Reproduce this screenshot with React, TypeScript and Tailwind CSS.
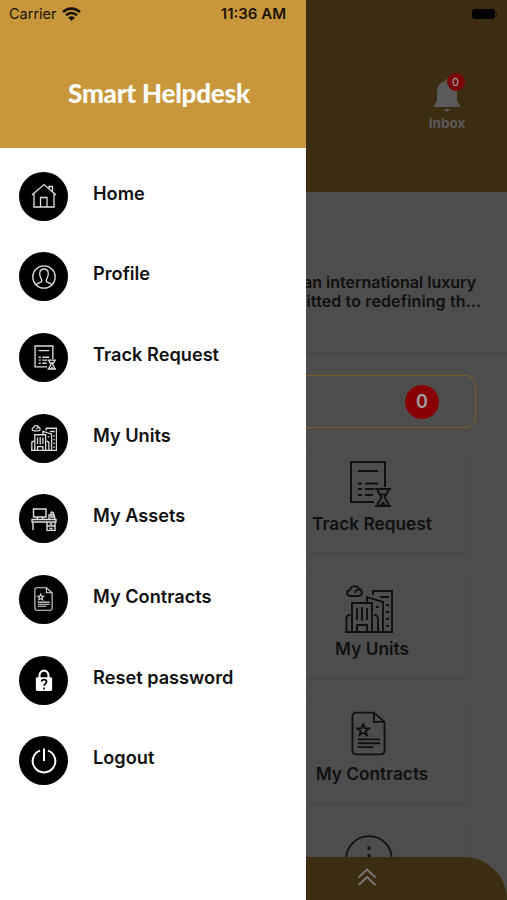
import { ReactNode } from 'react';

interface IconProps {
  className?: string;
}

function HomeIcon({ className }: IconProps) {
  return (
    <svg viewBox="0 0 26 26" className={className} fill="none" stroke="currentColor" strokeWidth="1.3">
      <path d="M1 12 13 1.5 25 12M3 10.5V24h20V10.5M18 5.5V3.5h3.5v5M9.5 24V14.5h6.5V24" />
    </svg>
  );
}

function ProfileIcon({ className }: IconProps) {
  return (
    <svg viewBox="0 0 26 26" className={className} fill="none" stroke="currentColor" strokeWidth="1.3">
      <circle cx="13" cy="13" r="11.2" />
      <path d="M5 20.8c1.5-2 5.5-1.8 5.8-3.6.2-1.3-.4-2-1-3.2C8 10.5 8 5 13 5s5 5.5 3.2 9c-.6 1.2-1.2 1.9-1 3.2.3 1.8 4.3 1.6 5.8 3.6" />
    </svg>
  );
}

function TrackIcon({ className }: IconProps) {
  return (
    <svg viewBox="0 0 44 46" className={className} fill="none" stroke="currentColor" strokeWidth="2">
      <path d="M25 41H2V1h34v25" />
      <path d="M9 10h20M9 22.5h4M16 22.5h13M9 28h4M16 28h9M9 34h4M16 34h8" />
      <path d="M26 28h16M26 45h16M28.5 28c0 4.5 3 5.5 4 8.5-1 2.5-4 4-4 8.5M39.5 28c0 4.5-3 5.5-4 8.5 1 2.5 4 4 4 8.5M31 33.5h6" />
      <path d="M30.5 44.5 34 40l3.5 4.5z" fill="currentColor" stroke="none" />
    </svg>
  );
}

function UnitsIcon({ className }: IconProps) {
  return (
    <svg viewBox="0 0 48 48" className={className} fill="none" stroke="currentColor" strokeWidth="1.9">
      <path d="M0 47h48M7 47V18h20v29M1.5 47V33c0-2 1-3 4-3M33 47V34c0-3-1-4-4-4M12 23v12M17 22v14M22 23v12M12 47v-7h10v7M22 17v-5l16 5v30M28 10V6h19v41" />
      <path d="M6 11c-5 0-5-5.5-1-6 1-5 8-5 9-1 4 1 4 7-1 7H5M10 8c0-3 3-4 5-3" />
      <path d="M35 12h9M31 22h3M41 20h3M41 27h3M41 34h3M41 41h3" />
    </svg>
  );
}

function AssetsIcon({ className }: IconProps) {
  return (
    <svg viewBox="0 0 26 24" className={className} fill="none" stroke="currentColor" strokeWidth="1.4">
      <path d="M2.5 2h12.5v8H2.5zM6 12l1-2h4l1 2M1 12.5h24v2.5H1zM2 15v8M16 15v8.5h8V15M16 19h8M18.5 17h3M18.5 21.5h3" />
      <path d="M18 12V8h5l1 4M19.5 8l1-3 2 1 .5 2M19 10h4" />
    </svg>
  );
}

function ContractIcon({ className }: IconProps) {
  return (
    <svg viewBox="0 0 36 46" className={className} fill="none" stroke="currentColor" strokeWidth="1.9">
      <path d="M5 1.5h18.5L34.5 11v30a3.5 3.5 0 0 1-3.5 3.5H5A3.5 3.5 0 0 1 1.5 41V5A3.5 3.5 0 0 1 5 1.5zM23.5 1.5V11h11" />
      <path d="m12.5 13.5 1.7 4 4.3.3-3.3 2.7 1.2 4.2-3.9-2.4-3.7 2.4 1.1-4.2-3.3-2.7 4.2-.3z" />
      <path d="M7 29h23M7 33h23M7 37h16" />
    </svg>
  );
}

function LockIcon({ className }: IconProps) {
  return (
    <svg viewBox="0 0 18 24" className={className} fill="none" stroke="currentColor">
      <path d="M4.3 11V7c0-7 9.4-7 9.4 0v4" strokeWidth="2.2" />
      <rect x=".5" y="8.5" width="17" height="14.5" rx="1.5" fill="currentColor" stroke="none" />
      <path d="M6.5 13.2c.2-2.8 5.2-2.8 5.2.1 0 1.9-2.6 2-2.6 4.2M9.1 19.3v2" stroke="#000" strokeWidth="1.7" />
    </svg>
  );
}

function PowerIcon({ className }: IconProps) {
  return (
    <svg viewBox="0 0 26 26" className={className} fill="none" stroke="currentColor" strokeWidth="2">
      <path d="M9 2.6a11.3 11.3 0 1 0 8 0M13 .5v12.5" />
    </svg>
  );
}

function BellIcon() {
  return (
    <svg viewBox="0 0 26 34" className="w-[26px] h-[34px]" fill="currentColor">
      <path d="M13 0c1.3 0 1.8.9 1.8 2.3C20.5 3.3 23 7.5 23 13v9l3 4.5V28H0v-1.5L3 22v-9C3 7.5 5.5 3.3 11.2 2.3 11.2.9 11.7 0 13 0zM10 30h6c-.5 3.3-5.5 3.3-6 0z" />
    </svg>
  );
}

function WifiIcon() {
  return (
    <svg viewBox="0 0 19 14" className="w-[19px] h-[14px]" fill="none" stroke="currentColor" strokeWidth="2.6">
      <path d="M1 5.2c4.8-4.8 12.2-4.8 17 0M4 8.3c3.2-3.1 7.8-3.1 11 0" />
      <path d="m9.5 14-3.3-3.4c1.8-1.7 4.8-1.7 6.6 0z" fill="currentColor" stroke="none" />
    </svg>
  );
}

const menuItems = [
  { label: 'Home', icon: <HomeIcon className="w-[26px] h-[26px]" /> },
  { label: 'Profile', icon: <ProfileIcon className="w-[26px] h-[26px]" /> },
  { label: 'Track Request', icon: <TrackIcon className="w-[23px] h-[25px] ml-[3px] [stroke-width:2.5]" /> },
  { label: 'My Units', icon: <UnitsIcon className="w-[26px] h-[26px] [stroke-width:2.4]" /> },
  { label: 'My Assets', icon: <AssetsIcon className="w-[26px] h-6" /> },
  { label: 'My Contracts', icon: <ContractIcon className="w-[19px] h-6 [stroke-width:2.1]" /> },
  { label: 'Reset password', icon: <LockIcon className="w-[18px] h-[23px] text-white" /> },
  { label: 'Logout', icon: <PowerIcon className="w-[26px] h-[26px] text-white" /> },
];

interface TileProps {
  label?: string;
  children: ReactNode;
}

function Tile({ label, children }: TileProps) {
  return (
    <div className="h-[103px] w-[163px] mb-[22px] pt-[9px] rounded-r-lg shadow-[0_1px_3px_rgba(0,0,0,0.12)]">
      <div className="flex h-[49px] w-[125px] items-center justify-center">{children}</div>
      {label && (
        <div className="w-[132px] pt-1 text-center text-[17.3px] leading-6 font-semibold whitespace-nowrap">{label}</div>
      )}
    </div>
  );
}

function Drawer() {
  return (
    <aside className="w-[306px] shrink-0 bg-white">
      <header className="h-[147.5px] bg-[#c8973b]">
        <div className="flex h-7 items-center pl-[9px] pr-[20px] text-[14.5px] text-[#191307]">
          <span className="mr-[5px]">Carrier</span>
          <WifiIcon />
          <span className="ml-auto font-semibold text-[15px]">11:36 AM</span>
        </div>
        <h1 className="mt-[48px] ml-[68px] font-['Lato'] text-[26px] leading-[34px] tracking-[-0.2px] font-black text-white whitespace-nowrap">
          Smart Helpdesk
        </h1>
      </header>
      <nav className="pt-[24px]">
        {menuItems.map((item) => (
          <a key={item.label} className="flex h-[80.7px] items-start pl-[19px]">
            <span className="flex size-[49px] items-center justify-center rounded-full bg-black text-[#dedede]">
              {item.icon}
            </span>
            <span className="ml-[25px] pt-[9px] text-[18.2px] leading-6 font-semibold text-[#111]">{item.label}</span>
          </a>
        ))}
      </nav>
    </aside>
  );
}

function Dashboard() {
  return (
    <main className="relative flex-1 overflow-hidden bg-[#4d4d4d] text-[#101010]">
      <header className="h-[192px] bg-[#3c2c12]">
        <div className="flex h-7 items-center justify-end pr-[10px]">
          <div className="h-[10px] w-[23px] rounded-[3px] bg-black" />
          <div className="ml-px h-1 w-px bg-black/50" />
        </div>
        <div className="mt-[51px] ml-[121px] flex w-10 flex-col items-center text-[#5a5a5a]">
          <div className="relative">
            <BellIcon />
            <span className="absolute -top-[6px] left-[12.5px] flex size-[18px] items-center justify-center rounded-full bg-[#7a0507] text-[11px] text-[#aaa]">
              0
            </span>
          </div>
          <span className="text-[13.5px] leading-5 font-bold">Inbox</span>
        </div>
      </header>
      <section className="h-[163px] border-b-[3px] border-[#484848] pt-[81px] text-[16px] leading-[18.5px] font-semibold whitespace-nowrap">
        <p className="-ml-[3px]">an international luxury</p>
        <p className="-ml-[14px] tracking-[0.13px]">mitted to redefining th...</p>
      </section>
      <section className="pt-5">
        <div className="flex h-[53px] w-[170px] items-center justify-end rounded-r-[10px] border border-l-0 border-[#7a5c26] pr-[36px]">
          <span className="flex size-[34px] items-center justify-center rounded-full bg-[#870006] text-[18px] font-semibold text-[#a0a0a0]">
            0
          </span>
        </div>
        <div className="pt-[22px]">
          <Tile label="Track Request">
            <TrackIcon className="ml-[5px] h-[46px] w-[44px]" />
          </Tile>
          <Tile label="My Units">
            <UnitsIcon className="size-[48px]" />
          </Tile>
          <Tile label="My Contracts">
            <ContractIcon className="h-[45px] w-[35px]" />
          </Tile>
          <Tile>
            <svg viewBox="0 0 48 48" className="size-[48px]" fill="none" stroke="currentColor" strokeWidth="1.8">
              <circle cx="24" cy="24" r="22.8" />
              <path d="M24 11.5v3.5M24 19v17" strokeWidth="3" />
            </svg>
          </Tile>
        </div>
      </section>
      <footer className="absolute inset-x-0 bottom-0 flex h-[43px] justify-center rounded-tr-[43px] bg-[#3c2c12] pr-[79px] pt-[11px]">
        <svg viewBox="0 0 20 18" className="h-[18px] w-5 text-[#777]" fill="none" stroke="currentColor" strokeWidth="1.8">
          <path d="m1.5 9.5 8.5-8 8.5 8M1.5 17l8.5-8 8.5 8" />
        </svg>
      </footer>
    </main>
  );
}

export default function App() {
  return (
    <div className="flex h-[900px] w-[507px] overflow-hidden font-['Inter',sans-serif]">
      <Drawer />
      <Dashboard />
    </div>
  );
}
